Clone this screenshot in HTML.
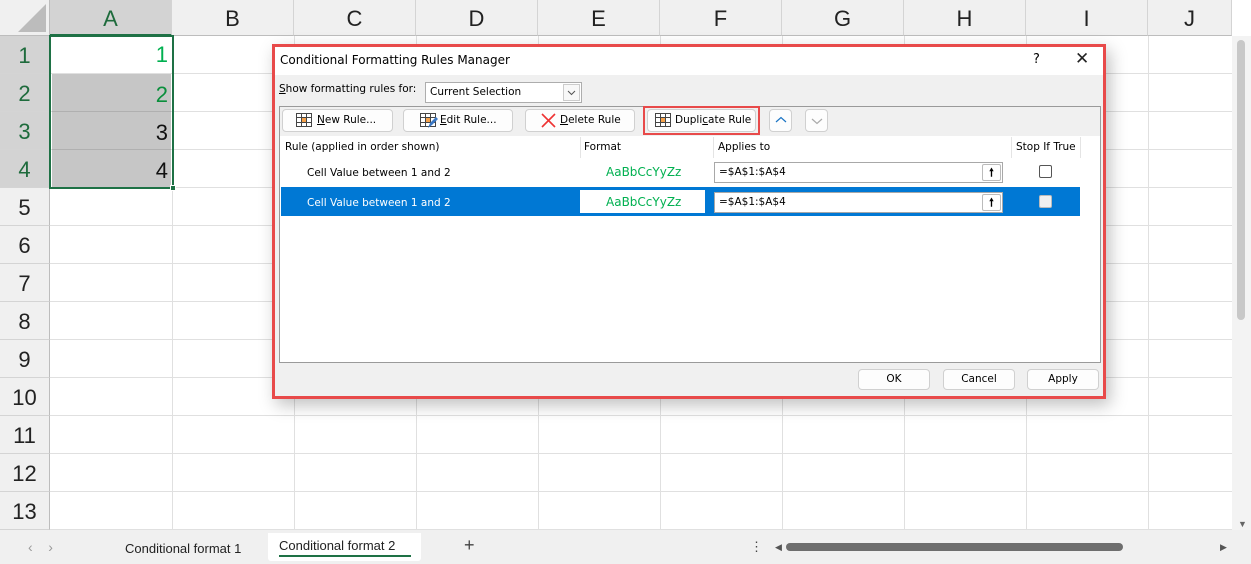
<!DOCTYPE html>
<html><head><style>
*{box-sizing:border-box;margin:0;padding:0}
body{width:1251px;height:564px;overflow:hidden;background:#fff;font-family:"Liberation Sans",sans-serif;position:relative}
.a{position:absolute}
.ch{top:0;height:36px;background:#f0f0f0;border-right:1px solid #d4d4d4;border-bottom:1px solid #bdbdbd;font-size:22px;text-align:center;line-height:38px;color:#222}
.rh{left:0;width:50px;height:38px;background:#f0f0f0;border-bottom:1px solid #d4d4d4;border-right:1px solid #bdbdbd;font-size:22px;text-align:center;line-height:40px;color:#222}
.vl{top:36px;width:1px;height:494px;background:#e0e0e0}
.hl{left:50px;width:1182px;height:1px;background:#e0e0e0}
.dt{font-size:10.5px;color:#000;font-family:"DejaVu Sans","Liberation Sans",sans-serif}
.btn{background:#fdfdfd;border:1px solid #d0d0d0;border-radius:4px;height:23px;top:109px;font-size:10.5px;font-family:"DejaVu Sans",sans-serif;line-height:21px}
.bb{background:#fdfdfd;border:1px solid #d0d0d0;border-radius:4px;height:21px;top:369px;font-size:10.5px;font-family:"DejaVu Sans",sans-serif;line-height:19px;text-align:center}
u{text-decoration:underline}
</style></head><body>
<div class="a" style="left:0;top:0;width:50px;height:36px;background:#f0f0f0;border-right:1px solid #bdbdbd;border-bottom:1px solid #bdbdbd"></div>
<div class="a" style="left:18px;top:4px;width:0;height:0;border-left:28px solid transparent;border-bottom:28px solid #bcbcbc"></div>
<div class="a ch" style="left:50px;width:122px;background:#d3d3d3;color:#1e6b3c;border-bottom:2px solid #1e7145">A</div>
<div class="a ch" style="left:172px;width:122px">B</div>
<div class="a ch" style="left:294px;width:122px">C</div>
<div class="a ch" style="left:416px;width:122px">D</div>
<div class="a ch" style="left:538px;width:122px">E</div>
<div class="a ch" style="left:660px;width:122px">F</div>
<div class="a ch" style="left:782px;width:122px">G</div>
<div class="a ch" style="left:904px;width:122px">H</div>
<div class="a ch" style="left:1026px;width:122px">I</div>
<div class="a ch" style="left:1148px;width:84px">J</div>
<div class="a vl" style="left:172px"></div><div class="a vl" style="left:294px"></div><div class="a vl" style="left:416px"></div><div class="a vl" style="left:538px"></div><div class="a vl" style="left:660px"></div><div class="a vl" style="left:782px"></div><div class="a vl" style="left:904px"></div><div class="a vl" style="left:1026px"></div><div class="a vl" style="left:1148px"></div>
<div class="a hl" style="top:73px"></div><div class="a hl" style="top:111px"></div><div class="a hl" style="top:149px"></div><div class="a hl" style="top:187px"></div><div class="a hl" style="top:225px"></div><div class="a hl" style="top:263px"></div><div class="a hl" style="top:301px"></div><div class="a hl" style="top:339px"></div><div class="a hl" style="top:377px"></div><div class="a hl" style="top:415px"></div><div class="a hl" style="top:453px"></div><div class="a hl" style="top:491px"></div><div class="a hl" style="top:529px"></div>
<div class="a rh" style="top:36px;background:#d3d3d3;color:#1e6b3c">1</div>
<div class="a rh" style="top:74px;background:#d3d3d3;color:#1e6b3c">2</div>
<div class="a rh" style="top:112px;background:#d3d3d3;color:#1e6b3c">3</div>
<div class="a rh" style="top:150px;background:#d3d3d3;color:#1e6b3c">4</div>
<div class="a rh" style="top:188px">5</div><div class="a rh" style="top:226px">6</div><div class="a rh" style="top:264px">7</div><div class="a rh" style="top:302px">8</div><div class="a rh" style="top:340px">9</div><div class="a rh" style="top:378px">10</div><div class="a rh" style="top:416px">11</div><div class="a rh" style="top:454px">12</div><div class="a rh" style="top:492px">13</div>
<div class="a" style="left:52px;top:74px;width:119px;height:113px;background:#c6c6c6"></div>
<div class="a" style="left:52px;top:111px;width:119px;height:1px;background:#b0b0b0"></div>
<div class="a" style="left:52px;top:149px;width:119px;height:1px;background:#b0b0b0"></div>
<div class="a" style="left:49px;top:35px;width:125px;height:154px;border:2px solid #1e7145"></div>
<div class="a" style="left:170px;top:185px;width:6px;height:6px;background:#1e7145;border:1px solid #fff"></div>
<div class="a" style="left:52px;top:42px;width:116px;font-size:22px;text-align:right;color:#00b050">1</div>
<div class="a" style="left:52px;top:82px;width:116px;font-size:22px;text-align:right;color:#0a8f3c">2</div>
<div class="a" style="left:52px;top:120px;width:116px;font-size:22px;text-align:right;color:#111">3</div>
<div class="a" style="left:52px;top:158px;width:116px;font-size:22px;text-align:right;color:#111">4</div>
<div class="a" style="left:1232px;top:36px;width:19px;height:494px;background:#f3f3f3"></div>
<div class="a" style="left:1237px;top:40px;width:8px;height:280px;background:#c8c8c8;border-radius:4px"></div>
<div class="a" style="left:1238px;top:519px;font-size:9px;color:#666">▼</div>
<div class="a" style="left:0;top:530px;width:1251px;height:34px;background:#f0f0f0"></div>
<div class="a" style="left:28px;top:539px;font-size:14px;color:#999">‹&nbsp;&nbsp;&nbsp;&nbsp;›</div>
<div class="a" style="left:125px;top:541px;font-size:13px;color:#222">Conditional format 1</div>
<div class="a" style="left:268px;top:533px;width:153px;height:28px;background:#fff;border-radius:0 0 3px 3px"></div>
<div class="a" style="left:279px;top:538px;font-size:13px;color:#222">Conditional format 2</div>
<div class="a" style="left:279px;top:555px;width:132px;height:2px;background:#1e7145"></div>
<div class="a" style="left:464px;top:535px;font-size:18px;color:#444">+</div>
<div class="a" style="left:750px;top:539px;font-size:13px;color:#444">⋮</div>
<div class="a" style="left:775px;top:542px;font-size:9px;color:#555">◀</div>
<div class="a" style="left:786px;top:543px;width:337px;height:8px;background:#6e6e6e;border-radius:4px"></div>
<div class="a" style="left:1220px;top:542px;font-size:9px;color:#555">▶</div>
<div class="a" style="left:272px;top:44px;width:834px;height:355px;background:#f0f0f0;border:3px solid #e84a4a;box-shadow:4px 6px 16px rgba(0,0,0,.25)"></div>
<div class="a" style="left:275px;top:47px;width:828px;height:28px;background:#fff"></div>
<div class="a dt" style="left:280px;top:53px;font-size:12px">Conditional Formatting Rules Manager</div>
<div class="a dt" style="left:1033px;top:52px;font-size:13px">?</div>
<div class="a dt" style="left:1075px;top:49px;font-size:17px;color:#222">✕</div>
<div class="a dt" style="left:279px;top:83px"><u>S</u>how formatting rules for:</div>
<div class="a dt" style="left:425px;top:82px;width:157px;height:21px;background:#fff;border:1px solid #adadad;padding:3px 4px">Current Selection</div>
<svg class="a" style="left:563px;top:84px" width="17" height="17"><rect x=".5" y=".5" width="16" height="16" fill="#f8f8f8" stroke="#ccc"/><path d="M5 7l3.5 3.5L12 7" fill="none" stroke="#555"/></svg>
<div class="a" style="left:279px;top:106px;width:822px;height:257px;border:1px solid #9a9a9a;background:#f0f0f0"></div>
<div class="btn a" style="left:282px;width:111px;padding-left:34px"><u>N</u>ew Rule...</div>
<div class="btn a" style="left:403px;width:110px;padding-left:36px"><u>E</u>dit Rule...</div>
<div class="btn a" style="left:525px;width:110px;padding-left:34px"><u>D</u>elete Rule</div>
<div class="btn a" style="left:647px;width:109px;padding-left:27px">Dupli<u>c</u>ate Rule</div>
<div class="a" style="left:643px;top:106px;width:117px;height:29px;border:2px solid #e84a4a"></div>
<div class="btn a" style="left:769px;width:23px"></div>
<svg class="a" style="left:775px;top:116px" width="12" height="8"><path d="M1 6l5-4.5L11 6" fill="none" stroke="#1a74c4" stroke-width="1.2"/></svg>
<div class="btn a" style="left:805px;width:23px"></div>
<svg class="a" style="left:811px;top:117px" width="12" height="8"><path d="M1 2l5 4.5L11 2" fill="none" stroke="#aaa" stroke-width="1.2"/></svg>
<svg class="a" style="left:296px;top:113px" width="16" height="14"><rect x=".5" y=".5" width="15" height="13" fill="#fff" stroke="#444"/><rect x="5" y="5" width="6" height="4" fill="#f5a14a"/><path d="M5.5 0v14M10.5 0v14M0 4.5h16M0 9.5h16" stroke="#444"/></svg>
<svg class="a" style="left:420px;top:113px" width="18" height="16"><rect x=".5" y=".5" width="15" height="13" fill="#fff" stroke="#444"/><rect x="5" y="5" width="6" height="4" fill="#f5a14a"/><path d="M5.5 0v14M10.5 0v14M0 4.5h16M0 9.5h16" stroke="#444"/><path d="M8 15l2-5 6-6 2 2-6 6z" fill="#3b78c4"/></svg>
<svg class="a" style="left:541px;top:113px" width="15" height="15"><path d="M1 1l13 13M14 1L1 14" stroke="#e33" stroke-width="1.6"/></svg>
<svg class="a" style="left:655px;top:113px" width="16" height="14"><rect x=".5" y=".5" width="15" height="13" fill="#fff" stroke="#444"/><rect x="5" y="5" width="6" height="4" fill="#f5a14a"/><path d="M5.5 0v14M10.5 0v14M0 4.5h16M0 9.5h16" stroke="#444"/></svg>
<div class="a" style="left:280px;top:136px;width:820px;height:226px;background:#fff"></div>
<div class="a" style="left:580px;top:137px;width:1px;height:21px;background:#e4e4e4"></div>
<div class="a" style="left:713px;top:137px;width:1px;height:21px;background:#e4e4e4"></div>
<div class="a" style="left:1011px;top:137px;width:1px;height:21px;background:#e4e4e4"></div>
<div class="a" style="left:1080px;top:137px;width:1px;height:21px;background:#e4e4e4"></div>
<div class="a dt" style="left:285px;top:141px">Rule (applied in order shown)</div>
<div class="a dt" style="left:584px;top:141px">Format</div>
<div class="a dt" style="left:718px;top:141px">Applies to</div>
<div class="a dt" style="left:1016px;top:141px">Stop If True</div>
<div class="a dt" style="left:307px;top:167px">Cell Value between 1 and 2</div>
<div class="a dt" style="left:606px;top:165px;font-size:12px;color:#00b050">AaBbCcYyZz</div>
<div class="a dt" style="left:714px;top:162px;width:289px;height:21px;background:#fff;border:1px solid #a8a8a8;padding:3px 4px">=$A$1:$A$4</div>
<div class="a dt" style="left:982px;top:164px;width:19px;height:17px;border:1px solid #bbb;border-radius:2px;text-align:center;font-size:11px;font-weight:bold;line-height:15px">🠕</div>
<div class="a" style="left:1039px;top:165px;width:13px;height:13px;border:1px solid #555;border-radius:2px;background:#fff"></div>
<div class="a" style="left:281px;top:187px;width:799px;height:29px;background:#0078d4"></div>
<div class="a dt" style="left:307px;top:197px;color:#fff">Cell Value between 1 and 2</div>
<div class="a" style="left:580px;top:190px;width:125px;height:23px;background:#fff"></div>
<div class="a dt" style="left:606px;top:195px;font-size:12px;color:#00b050">AaBbCcYyZz</div>
<div class="a dt" style="left:714px;top:192px;width:289px;height:21px;background:#fff;border:1px solid #a8a8a8;padding:3px 4px">=$A$1:$A$4</div>
<div class="a dt" style="left:982px;top:194px;width:19px;height:17px;border:1px solid #bbb;border-radius:2px;text-align:center;font-size:11px;font-weight:bold;line-height:15px">🠕</div>
<div class="a" style="left:1039px;top:195px;width:13px;height:13px;border:1px solid #bbb;border-radius:2px;background:#f0f0f0"></div>
<div class="bb a" style="left:858px;width:72px">OK</div>
<div class="bb a" style="left:943px;width:72px">Cancel</div>
<div class="bb a" style="left:1027px;width:72px">Apply</div>
</body></html>
